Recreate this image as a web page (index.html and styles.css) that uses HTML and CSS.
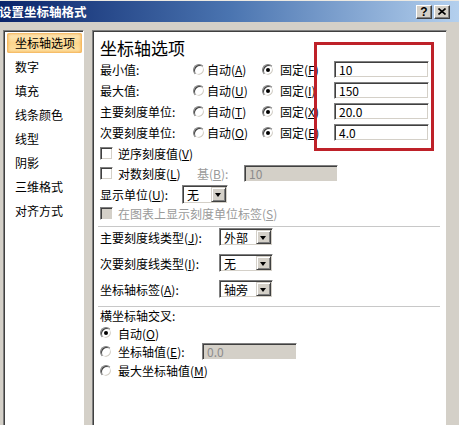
FILE: index.html
```html
<!DOCTYPE html>
<html lang="zh-CN">
<head>
  <meta charset="UTF-8" />
  <title>设置坐标轴格式</title>
  <link rel="stylesheet" href="styles.css">
</head>
<body>
  <div class="titlebar">
    <span class="title">设置坐标轴格式</span>
    <div class="tb-btns">
      <span class="tb-btn">?</span>
      <span class="tb-btn"><svg width="8" height="7" viewBox="0 0 8 7"><path d="M0.5 0.5L7.5 6.5M7.5 0.5L0.5 6.5" stroke="#000" stroke-width="1.6"/></svg></span>
    </div>
  </div>

  <div class="main">
    <ul class="nav">
      <li class="on">坐标轴选项</li>
      <li>数字</li>
      <li>填充</li>
      <li>线条颜色</li>
      <li>线型</li>
      <li>阴影</li>
      <li>三维格式</li>
      <li>对齐方式</li>
    </ul>

    <div class="pane">
      <h2>坐标轴选项</h2>

      <div class="opts">
        <span>最小值:</span>
        <span class="radio"></span><span>自动(<u>A</u>)</span>
        <span class="radio checked"></span><span>固定(<u>F</u>)</span>
        <span class="field">10</span>

        <span>最大值:</span>
        <span class="radio"></span><span>自动(<u>U</u>)</span>
        <span class="radio checked"></span><span>固定(<u>I</u>)</span>
        <span class="field">150</span>

        <span>主要刻度单位:</span>
        <span class="radio"></span><span>自动(<u>T</u>)</span>
        <span class="radio checked"></span><span>固定(<u>X</u>)</span>
        <span class="field">20.0</span>

        <span>次要刻度单位:</span>
        <span class="radio"></span><span>自动(<u>O</u>)</span>
        <span class="radio checked"></span><span>固定(<u>E</u>)</span>
        <span class="field">4.0</span>
      </div>

      <!-- annotation drawn over the dialog -->
      <div class="red-mark"></div>

      <div class="row">
        <span class="check"></span><span>逆序刻度值(<u>V</u>)</span>
      </div>
      <div class="row">
        <span class="check"></span><span class="log-lbl">对数刻度(<u>L</u>)</span>
        <span class="base-lbl dim">基(<u>B</u>):</span>
        <span class="field off base">10</span>
      </div>
      <div class="row unit-row">
        <span class="unit-lbl">显示单位(<u>U</u>):</span>
        <span class="select small"><span class="val">无</span><span class="btn"></span></span>
      </div>
      <div class="row short dim">
        <span class="check off"></span><span>在图表上显示刻度单位标签(<u>S</u>)</span>
      </div>

      <div class="sep"></div>

      <div class="row sel-row">
        <span class="sel-lbl">主要刻度线类型(<u>J</u>):</span>
        <span class="select"><span class="val">外部</span><span class="btn"></span></span>
      </div>
      <div class="row sel-row">
        <span class="sel-lbl">次要刻度线类型(<u>I</u>):</span>
        <span class="select"><span class="val">无</span><span class="btn"></span></span>
      </div>
      <div class="row sel-row">
        <span class="sel-lbl">坐标轴标签(<u>A</u>):</span>
        <span class="select"><span class="val">轴旁</span><span class="btn"></span></span>
      </div>

      <div class="sep sep2"></div>

      <div class="cross-title">横坐标轴交叉:</div>
      <div class="row r-auto">
        <span class="radio checked left"></span><span>自动(<u>O</u>)</span>
      </div>
      <div class="row r-val">
        <span class="radio left"></span><span class="val-lbl">坐标轴值(<u>E</u>):</span>
        <span class="field off">0.0</span>
      </div>
      <div class="row r-max">
        <span class="radio left"></span><span>最大坐标轴值(<u>M</u>)</span>
      </div>
    </div>
  </div>
</body>
</html>
```

FILE: styles.css
```css
*{margin:0;padding:0;box-sizing:border-box;}
html,body{width:100%;height:100%;overflow:hidden;}
body{background:#d4d0c8;border-top:1px solid #ece9e2;font-family:"Noto Sans CJK SC","Liberation Sans",sans-serif;font-size:12px;color:#000;}
u{text-decoration:underline;}

/* title bar */
.titlebar{height:21px;display:flex;align-items:center;justify-content:space-between;padding-right:9px;background:linear-gradient(90deg,#0a246a 0%,#4a74b0 50%,#b4d0ee 100%);}
.title{color:#fff;font-weight:bold;font-size:12.5px;line-height:21px;margin-left:-1px;}
.tb-btns{display:flex;gap:2px;}
.tb-btn{width:16px;height:14px;display:flex;align-items:center;justify-content:center;background:#d4d0c8;border:1px solid;border-color:#fff #404040 #404040 #fff;box-shadow:inset -1px -1px #808080;font:bold 12px/12px "Liberation Sans",sans-serif;}

/* body */
.main{display:flex;gap:8px;padding:8px 12px 0 3px;height:420px;}

.nav{width:81px;list-style:none;background:#fff;border:1px solid;border-color:#808080 #fff #fff #808080;box-shadow:inset 1px 1px #404040;padding:2px 1px 0 3px;}
.nav li{height:20px;line-height:20px;margin-bottom:4px;padding-left:8px;white-space:nowrap;}
.nav li.on{background:linear-gradient(#fdebc0,#fcd68e 50%,#fde4a8);box-shadow:inset 0 0 3px 1px #f3a948;border-radius:2px;}

.pane{flex:1;position:relative;background:#fff;border:1px solid;border-color:#808080 #d4d0c8 #fff #808080;box-shadow:inset 1px 1px #404040;padding:6px 0 0 7px;}
.pane h2{font-size:17px;font-weight:normal;line-height:22px;height:22px;}

.opts{display:grid;grid-template-columns:93px 14px 55px 18px 54px 95px;grid-auto-rows:21px;align-items:center;white-space:nowrap;}

.red-mark{position:absolute;left:221px;top:11px;width:120px;height:109px;border:3px solid #be2129;}

/* controls */
.field{display:block;width:95px;height:17px;border:1px solid;border-color:#808080 #fff #fff #808080;box-shadow:inset 1px 1px #404040,inset -1px -1px #d4d0c8;background:#fff;padding-left:4px;font-size:12px;line-height:15px;}
.field.off{background:#d4d0c8;color:#8c8c8c;}

.radio{position:relative;display:block;width:12px;height:12px;border-radius:50%;background:#fff;border:1px solid;border-color:#808080 #fff #fff #808080;box-shadow:inset 1px 1px #404040,inset -1px -1px #d4d0c8;}
.radio.checked::after{content:"";position:absolute;left:3px;top:3px;width:4px;height:4px;border-radius:50%;background:#000;}
.radio.left{margin-right:6px;}

.check{display:block;width:13px;height:13px;margin-right:5px;background:#fff;border:1px solid;border-color:#808080 #fff #fff #808080;box-shadow:inset 1px 1px #404040,inset -1px -1px #d4d0c8;}
.check.off{background:#d4d0c8;}

.select{display:flex;width:54px;height:18px;background:#fff;border:1px solid;border-color:#808080 #fff #fff #808080;box-shadow:inset 1px 1px #404040,inset -1px -1px #d4d0c8;padding:1px;}
.select.small{width:46px;height:19px;}
.select .val{flex:1;padding-left:3px;line-height:15px;}
.select .btn{position:relative;width:15px;background:#d4d0c8;border:1px solid;border-color:#d4d0c8 #404040 #404040 #d4d0c8;box-shadow:inset 1px 1px #fff,inset -1px -1px #808080;}
.select .btn::after{content:"";position:absolute;left:3px;top:5px;border-left:3.5px solid transparent;border-right:3.5px solid transparent;border-top:4px solid #000;}

/* rows */
.row{display:flex;align-items:center;height:20px;white-space:nowrap;}
.dim{color:#9a9a9a;}
.log-lbl{width:79px;}
.base-lbl{width:47px;}
.field.base{width:94px;}
.unit-row{height:22px;}
.unit-lbl{width:82px;}
.short{height:17px;}

.sep{height:1px;background:#c8c8c8;margin:4px 6px 0 -2px;}
.sep2{margin-top:7px;}

.sel-row{margin-bottom:6px;}
.sel-row:last-of-type{margin-bottom:0;}
.sel-lbl{width:119px;}

.cross-title{line-height:16px;margin-top:1px;}
.r-auto{height:18px;}
.r-val{height:19px;}
.val-lbl{width:84px;}
.r-max{height:19px;}
```
